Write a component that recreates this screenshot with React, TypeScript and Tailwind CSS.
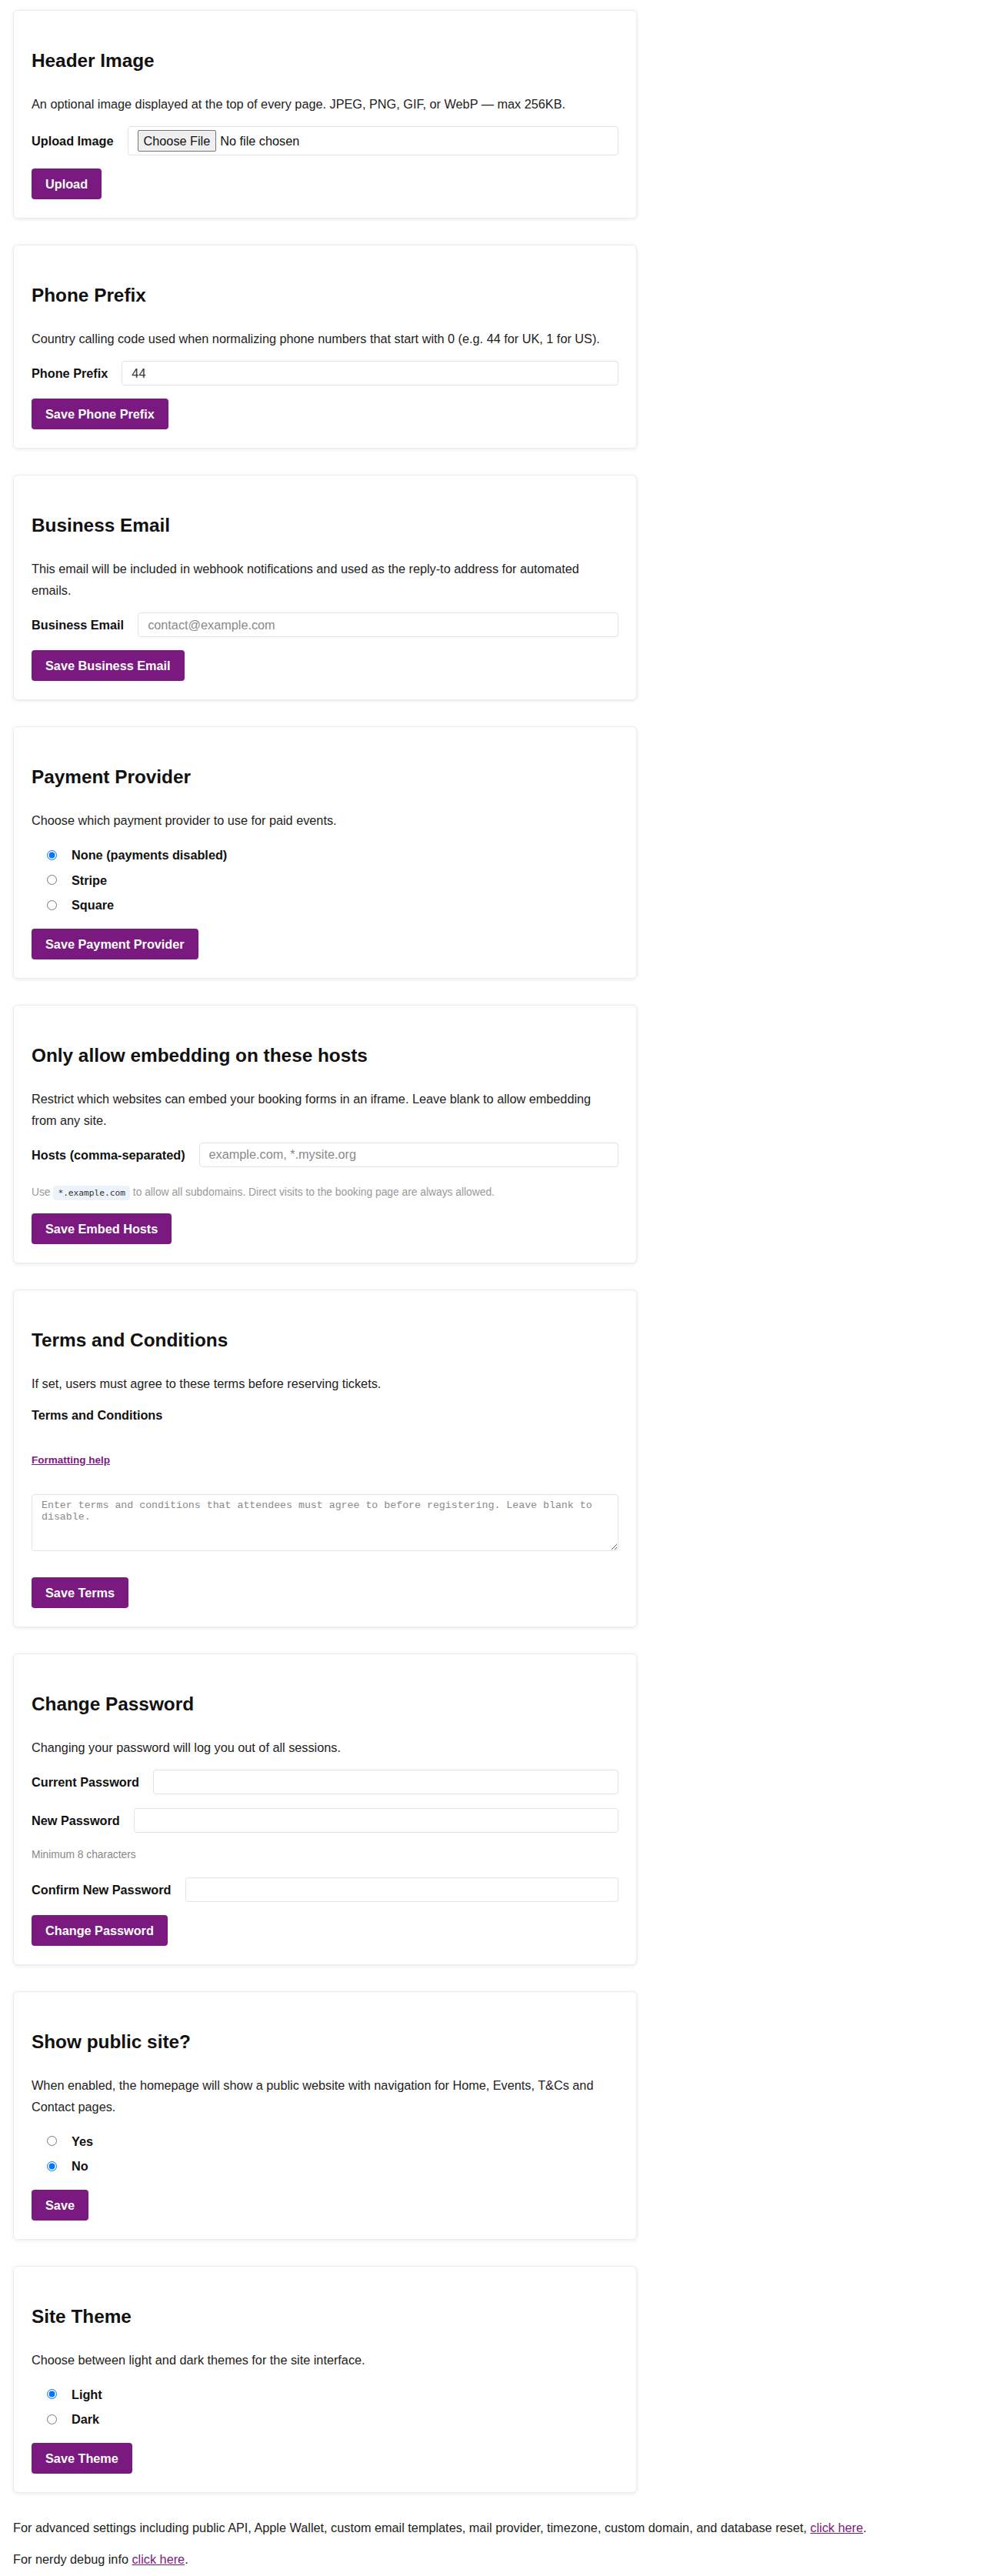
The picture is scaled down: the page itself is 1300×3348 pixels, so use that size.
import type { ReactNode } from 'react';

const FONT = { fontFamily: '"Liberation Sans", Arial, sans-serif' };

function Card({ title, children }: { title: string; children: ReactNode }) {
  return (
    <section className="w-[811px] rounded-md border border-[#ececec] bg-white p-[23px] pb-6 shadow-[0_1px_5px_rgba(0,0,0,0.09)]">
      <h2 className="mt-6 mb-6 text-[24.35px] leading-9 font-bold text-[#111]">{title}</h2>
      {children}
    </section>
  );
}

function Desc({ children }: { children: ReactNode }) {
  return <p className="mb-[15px] text-[16.25px] leading-7 text-[#222]">{children}</p>;
}

function SaveButton({ label }: { label: string }) {
  return (
    <button
      type="button"
      className="block h-10 rounded-[4px] bg-[#7a1a80] px-[18px] text-[16.25px] leading-6 font-bold text-white"
    >
      {label}
    </button>
  );
}

function Field({
  label,
  type = 'text',
  value,
  placeholder,
}: {
  label: string;
  type?: string;
  value?: string;
  placeholder?: string;
}) {
  return (
    <div className="flex items-center gap-[18px]">
      <label className="shrink-0 text-[16.25px] leading-6 font-bold text-[#111]">{label}</label>
      <input
        type={type}
        defaultValue={value}
        placeholder={placeholder}
        className="h-8 flex-1 rounded-[4px] border border-[#e3e3e3] bg-white px-3 text-[16.25px] text-[#333] placeholder:text-[#8a8a8a]"
      />
    </div>
  );
}

function RadioGroup({ name, options, checked }: { name: string; options: string[]; checked: string }) {
  return (
    <div className="mt-[2px] mb-[14px] flex flex-col">
      {options.map((opt) => (
        <label key={opt} className="flex h-[32.5px] items-center gap-[19px] pl-5">
          <input
            type="radio"
            name={name}
            defaultChecked={opt === checked}
            className="m-0 h-[13px] w-[13px]"
          />
          <span className="text-[16.25px] leading-6 font-bold text-[#111]">{opt}</span>
        </label>
      ))}
    </div>
  );
}

export default function App() {
  return (
    <div className="min-h-screen bg-white pt-[13px] pl-[17px] pb-2" style={FONT}>
      <div className="flex flex-col gap-[34px]">
        <Card title="Header Image">
          <Desc>An optional image displayed at the top of every page. JPEG, PNG, GIF, or WebP — max 256KB.</Desc>
          <div className="flex items-center gap-[18px]">
            <label className="shrink-0 text-[16.25px] leading-6 font-bold text-[#111]">Upload Image</label>
            <div className="flex h-[38px] flex-1 items-center rounded-[4px] border border-[#e3e3e3] px-3">
              <input
                type="file"
                className="text-[16.25px] text-[#111] file:mr-[5px] file:rounded-[2px] file:border file:border-[#767676] file:bg-[#efefef] file:px-[7px] file:py-[1px] file:text-[#111]"
              />
            </div>
          </div>
          <div className="mt-[17px]">
            <SaveButton label="Upload" />
          </div>
        </Card>

        <Card title="Phone Prefix">
          <Desc>Country calling code used when normalizing phone numbers that start with 0 (e.g. 44 for UK, 1 for US).</Desc>
          <Field label="Phone Prefix" value="44" />
          <div className="mt-[17px]">
            <SaveButton label="Save Phone Prefix" />
          </div>
        </Card>

        <Card title="Business Email">
          <Desc>
            This email will be included in webhook notifications and used as the reply-to address for automated
            emails.
          </Desc>
          <Field label="Business Email" type="email" placeholder="contact@example.com" />
          <div className="mt-[17px]">
            <SaveButton label="Save Business Email" />
          </div>
        </Card>

        <Card title="Payment Provider">
          <Desc>Choose which payment provider to use for paid events.</Desc>
          <RadioGroup
            name="payment"
            options={['None (payments disabled)', 'Stripe', 'Square']}
            checked="None (payments disabled)"
          />
          <SaveButton label="Save Payment Provider" />
        </Card>

        <Card title="Only allow embedding on these hosts">
          <Desc>
            Restrict which websites can embed your booking forms in an iframe. Leave blank to allow embedding from
            any site.
          </Desc>
          <Field label="Hosts (comma-separated)" placeholder="example.com, *.mysite.org" />
          <p className="mt-[23px] mb-4 text-[13.8px] leading-5 text-[#999]">
            Use{' '}
            <code
              className="rounded-[4px] bg-[#edf3fa] px-[6px] py-[3px] text-[11.2px] text-[#333]"
              style={{ fontFamily: '"DejaVu Sans Mono", monospace' }}
            >
              *.example.com
            </code>{' '}
            to allow all subdomains. Direct visits to the booking page are always allowed.
          </p>
          <SaveButton label="Save Embed Hosts" />
        </Card>

        <Card title="Terms and Conditions">
          <Desc>If set, users must agree to these terms before reserving tickets.</Desc>
          <div className="text-[16.25px] leading-6 font-bold text-[#111]">Terms and Conditions</div>
          <a href="#" className="mt-[37px] block text-[13.5px] leading-5 font-bold text-[#7a1a80] underline">
            Formatting help
          </a>
          <textarea
            className="mt-[34px] block h-[74px] w-full rounded-[4px] border border-[#e3e3e3] px-3 py-[6px] text-[13.25px] leading-[15.5px] placeholder:text-[#8a8a8a]"
            style={{ fontFamily: '"Liberation Mono", monospace' }}
            placeholder="Enter terms and conditions that attendees must agree to before registering. Leave blank to disable."
          />
          <div className="mt-[34px]">
            <SaveButton label="Save Terms" />
          </div>
        </Card>

        <Card title="Change Password">
          <Desc>Changing your password will log you out of all sessions.</Desc>
          <Field label="Current Password" type="password" />
          <div className="mt-[18px]">
            <Field label="New Password" type="password" />
          </div>
          <p className="mt-[19px] text-[13.8px] leading-5 text-[#888]">Minimum 8 characters</p>
          <div className="mt-[19px]">
            <Field label="Confirm New Password" type="password" />
          </div>
          <div className="mt-[17px]">
            <SaveButton label="Change Password" />
          </div>
        </Card>

        <Card title="Show public site?">
          <Desc>
            When enabled, the homepage will show a public website with navigation for Home, Events, T&amp;Cs and
            Contact pages.
          </Desc>
          <RadioGroup name="public" options={['Yes', 'No']} checked="No" />
          <SaveButton label="Save" />
        </Card>

        <Card title="Site Theme">
          <Desc>Choose between light and dark themes for the site interface.</Desc>
          <RadioGroup name="theme" options={['Light', 'Dark']} checked="Light" />
          <SaveButton label="Save Theme" />
        </Card>
      </div>

      <p className="mt-[31px] text-[16.25px] leading-7 text-[#222]">
        For advanced settings including public API, Apple Wallet, custom email templates, mail provider, timezone,
        custom domain, and database reset,{' '}
        <a href="#" className="text-[#7a1a80] underline">
          click here
        </a>
        .
      </p>
      <p className="mt-[13px] text-[16.25px] leading-7 text-[#222]">
        For nerdy debug info{' '}
        <a href="#" className="text-[#7a1a80] underline">
          click here
        </a>
        .
      </p>
    </div>
  );
}
